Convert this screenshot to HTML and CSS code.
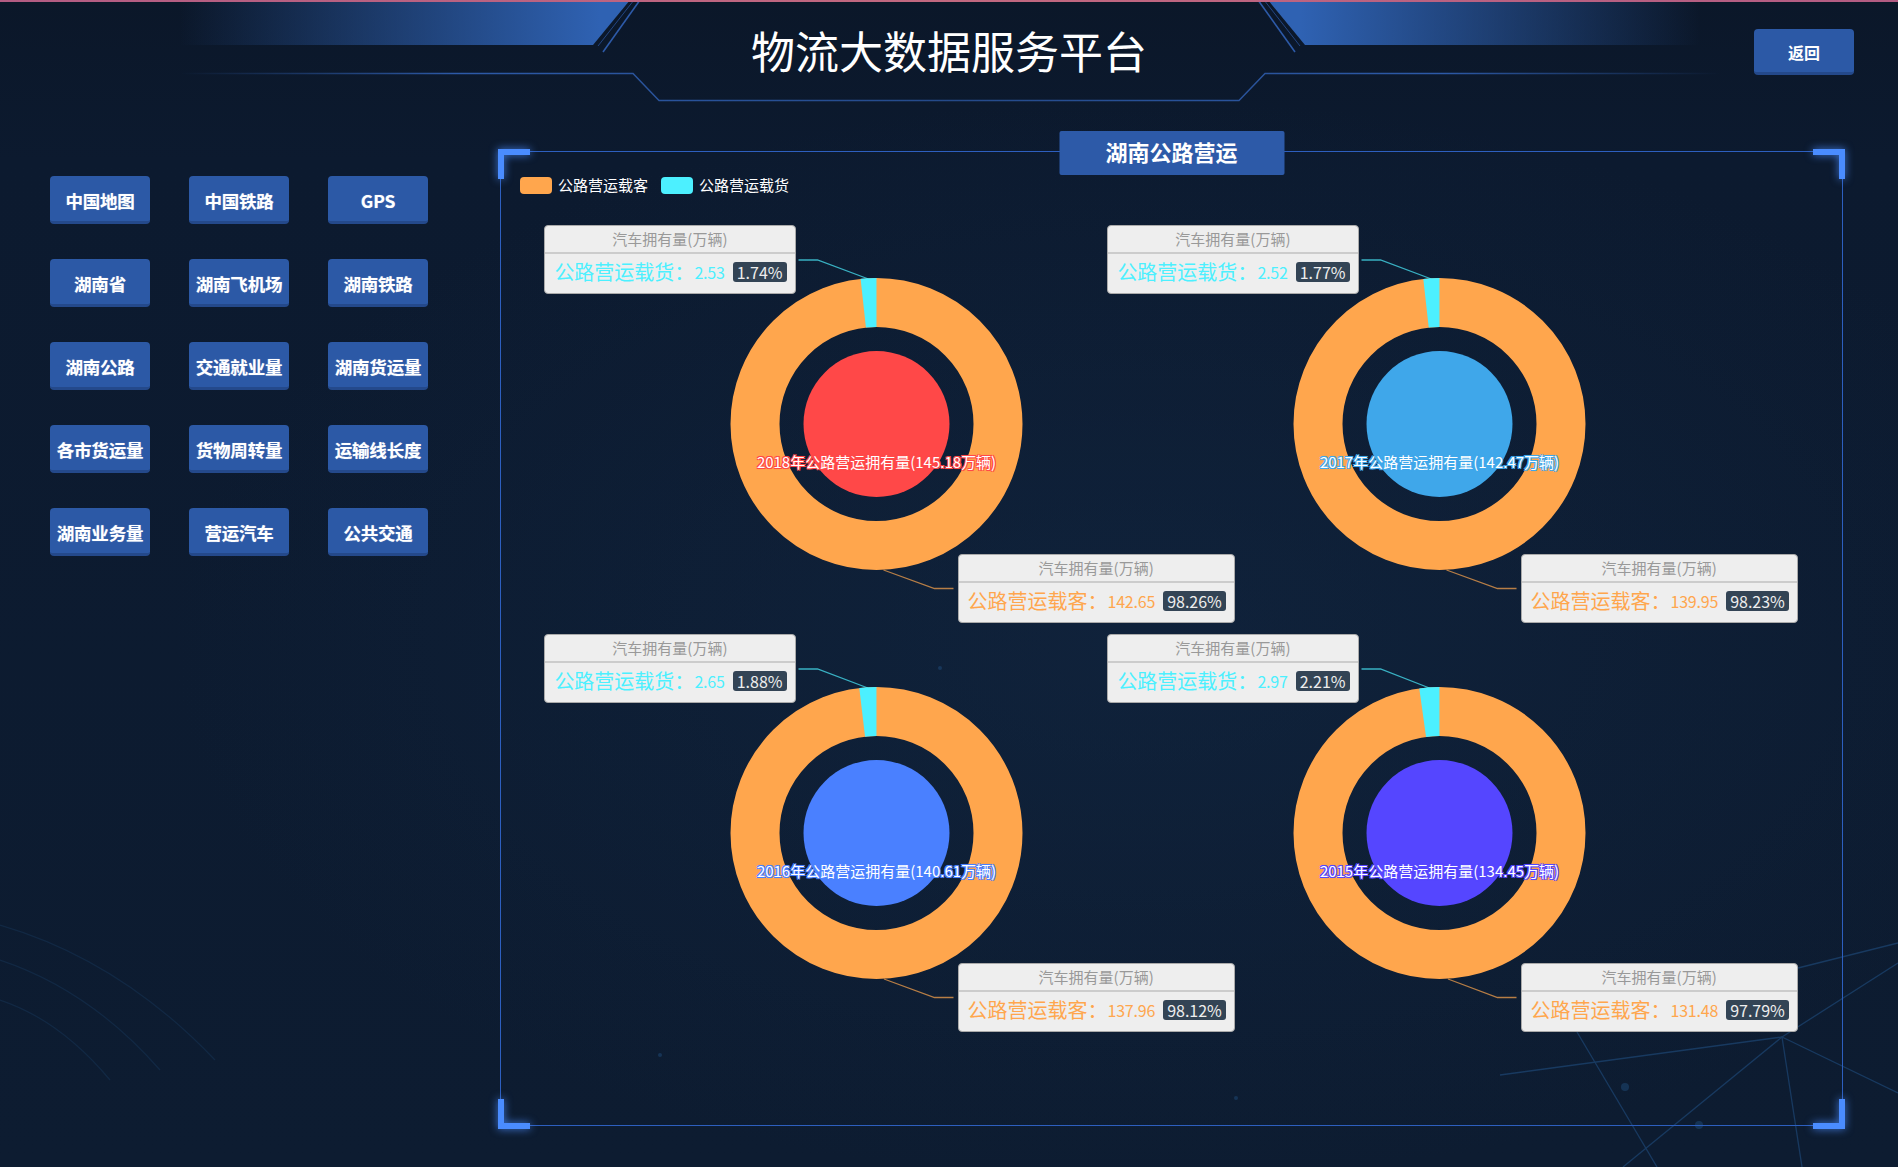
FILE: index.html
```html
<!DOCTYPE html>
<html lang="zh-CN">
<head>
<meta charset="utf-8">
<title>物流大数据服务平台</title>
<link rel="stylesheet" href="styles.css">
</head>
<body>
<div class="page">
  <svg class="bg-net" width="1898" height="1167" viewBox="0 0 1898 1167">
    <g stroke="#23578f" stroke-width="1.3" fill="none" opacity="0.5">
      <path d="M1782 1037 L1623 1167"/>
      <path d="M1782 1037 L1898 963"/>
      <path d="M1782 1037 L1802 1167"/>
      <path d="M1782 1037 L1898 1093"/>
      <path d="M1577 1032 L1657 1167"/>
      <path d="M1790 970 L1898 943"/>
      <path d="M1500 1075 L1782 1037"/>
    </g>
    <g stroke="#1d4670" stroke-width="1.2" fill="none" opacity="0.3">
      <path d="M0 925 Q120 960 215 1060"/>
      <path d="M0 960 Q90 990 160 1070"/>
      <path d="M0 1000 Q60 1020 110 1080"/>
    </g>
    <g fill="#2a6aa8" opacity="0.3">
      <circle cx="1789" cy="1005" r="2.5"/>
      <circle cx="1625" cy="1087" r="4"/>
      <circle cx="1699" cy="1125" r="4"/>
      <circle cx="1245" cy="248" r="2"/>
      <circle cx="940" cy="668" r="2"/>
      <circle cx="1236" cy="1098" r="2"/>
      <circle cx="660" cy="1055" r="2"/>
      <circle cx="1020" cy="1020" r="2"/>
    </g>
  </svg>

  <header class="header">
    <svg class="header-deco" width="1898" height="104" viewBox="0 0 1898 104">
      <defs>
        <linearGradient id="gTop" x1="0" y1="0" x2="1" y2="0">
          <stop offset="0" stop-color="#b35c83"/>
          <stop offset="0.5" stop-color="#c2687f"/>
          <stop offset="1" stop-color="#b35c83"/>
        </linearGradient>
        <linearGradient id="gLeft" gradientUnits="userSpaceOnUse" x1="180" y1="0" x2="600" y2="0">
          <stop offset="0" stop-color="#2f62b3" stop-opacity="0"/>
          <stop offset="1" stop-color="#2f62b3" stop-opacity="1"/>
        </linearGradient>
        <linearGradient id="gRight" gradientUnits="userSpaceOnUse" x1="1300" y1="0" x2="1700" y2="0">
          <stop offset="0" stop-color="#2f62b3" stop-opacity="1"/>
          <stop offset="1" stop-color="#2f62b3" stop-opacity="0"/>
        </linearGradient>
        <linearGradient id="gLine" gradientUnits="userSpaceOnUse" x1="180" y1="0" x2="1720" y2="0">
          <stop offset="0" stop-color="#2d5aa8" stop-opacity="0"/>
          <stop offset="0.18" stop-color="#2d5aa8" stop-opacity="1"/>
          <stop offset="0.5" stop-color="#2d5aa8" stop-opacity="0.75"/>
          <stop offset="0.82" stop-color="#2d5aa8" stop-opacity="1"/>
          <stop offset="1" stop-color="#2d5aa8" stop-opacity="0"/>
        </linearGradient>
      </defs>
      <polygon points="0,0 630,0 593,45 0,45" fill="url(#gLeft)"/>
      <polygon points="1268,0 1898,0 1898,45 1305,45" fill="url(#gRight)"/>
      <path d="M640 0 L603 52" stroke="#2d5aa8" stroke-width="1.6" fill="none"/>
      <path d="M634 0 L598 46" stroke="#2d5aa8" stroke-width="1" fill="none" opacity="0.7"/>
      <path d="M1258 0 L1295 52" stroke="#2d5aa8" stroke-width="1.6" fill="none"/>
      <path d="M1264 0 L1300 46" stroke="#2d5aa8" stroke-width="1" fill="none" opacity="0.7"/>
      <polyline points="180,73.5 633,73.5 659,100.5 1239,100.5 1265,73.5 1720,73.5" stroke="url(#gLine)" stroke-width="1.4" fill="none"/>
      <rect x="0" y="0" width="1898" height="2" fill="url(#gTop)"/>
    </svg>
    <div class="header-side"></div>
    <h1 class="title">物流大数据服务平台</h1>
    <div class="header-side header-right">
      <button class="back-btn">返回</button>
    </div>
  </header>

  <main class="main">
    <nav class="menu">
      <button class="menu-btn">中国地图</button>
      <button class="menu-btn">中国铁路</button>
      <button class="menu-btn">GPS</button>
      <button class="menu-btn">湖南省</button>
      <button class="menu-btn">湖南飞机场</button>
      <button class="menu-btn">湖南铁路</button>
      <button class="menu-btn">湖南公路</button>
      <button class="menu-btn">交通就业量</button>
      <button class="menu-btn">湖南货运量</button>
      <button class="menu-btn">各市货运量</button>
      <button class="menu-btn">货物周转量</button>
      <button class="menu-btn">运输线长度</button>
      <button class="menu-btn">湖南业务量</button>
      <button class="menu-btn">营运汽车</button>
      <button class="menu-btn">公共交通</button>
    </nav>

    <section class="panel">
      <i class="corner corner-tl"></i>
      <i class="corner corner-tr"></i>
      <i class="corner corner-bl"></i>
      <i class="corner corner-br"></i>
      <div class="panel-tab">湖南公路营运</div>

      <div class="legend">
        <div class="legend-item"><span class="swatch swatch-passenger"></span>公路营运载客</div>
        <div class="legend-item"><span class="swatch swatch-cargo"></span>公路营运载货</div>
      </div>

      <div class="charts">
        <!-- 2018 -->
        <div class="chart y2018">
          <svg class="donut" width="563" height="409" viewBox="0 0 563 409">
            <circle cx="281.5" cy="204" r="121.5" fill="none" stroke="#ffa64d" stroke-width="49"/>
            <circle cx="281.5" cy="204" r="121.5" fill="none" stroke="#4cf0ff" stroke-width="49" stroke-dasharray="13.28 800" transform="rotate(-96.26 281.5 204)"/>
            <circle class="pie" cx="281.5" cy="204" r="73"/>
            <polyline points="203.5,40 222.5,40 273.5,59" stroke="#4cf0ff" stroke-opacity="0.7" stroke-width="1.3" fill="none"/>
            <polyline points="288.5,350 339.5,368.5 358.5,368.5" stroke="#ffa64d" stroke-opacity="0.7" stroke-width="1.3" fill="none"/>
          </svg>
          <div class="pie-label">2018年公路营运拥有量(145.18万辆)</div>
          <div class="tip tip-top">
            <div class="tip-head">汽车拥有量(万辆)</div>
            <div class="tip-body cargo"><span class="tip-name">公路营运载货：</span><span class="tip-val">2.53</span><span class="tip-per">1.74%</span></div>
          </div>
          <div class="tip tip-bottom">
            <div class="tip-head">汽车拥有量(万辆)</div>
            <div class="tip-body passenger"><span class="tip-name">公路营运载客：</span><span class="tip-val">142.65</span><span class="tip-per">98.26%</span></div>
          </div>
        </div>

        <!-- 2017 -->
        <div class="chart y2017">
          <svg class="donut" width="563" height="409" viewBox="0 0 563 409">
            <circle cx="281.5" cy="204" r="121.5" fill="none" stroke="#ffa64d" stroke-width="49"/>
            <circle cx="281.5" cy="204" r="121.5" fill="none" stroke="#4cf0ff" stroke-width="49" stroke-dasharray="13.51 800" transform="rotate(-96.37 281.5 204)"/>
            <circle class="pie" cx="281.5" cy="204" r="73"/>
            <polyline points="203.5,40 222.5,40 273.4,59" stroke="#4cf0ff" stroke-opacity="0.7" stroke-width="1.3" fill="none"/>
            <polyline points="288.5,350 339.5,368.5 358.5,368.5" stroke="#ffa64d" stroke-opacity="0.7" stroke-width="1.3" fill="none"/>
          </svg>
          <div class="pie-label">2017年公路营运拥有量(142.47万辆)</div>
          <div class="tip tip-top">
            <div class="tip-head">汽车拥有量(万辆)</div>
            <div class="tip-body cargo"><span class="tip-name">公路营运载货：</span><span class="tip-val">2.52</span><span class="tip-per">1.77%</span></div>
          </div>
          <div class="tip tip-bottom">
            <div class="tip-head">汽车拥有量(万辆)</div>
            <div class="tip-body passenger"><span class="tip-name">公路营运载客：</span><span class="tip-val">139.95</span><span class="tip-per">98.23%</span></div>
          </div>
        </div>

        <!-- 2016 -->
        <div class="chart y2016">
          <svg class="donut" width="563" height="409" viewBox="0 0 563 409">
            <circle cx="281.5" cy="204" r="121.5" fill="none" stroke="#ffa64d" stroke-width="49"/>
            <circle cx="281.5" cy="204" r="121.5" fill="none" stroke="#4cf0ff" stroke-width="49" stroke-dasharray="14.35 800" transform="rotate(-96.77 281.5 204)"/>
            <circle class="pie" cx="281.5" cy="204" r="73"/>
            <polyline points="203.5,40 222.5,40 272.9,59" stroke="#4cf0ff" stroke-opacity="0.7" stroke-width="1.3" fill="none"/>
            <polyline points="289,350 339.5,368.5 358.5,368.5" stroke="#ffa64d" stroke-opacity="0.7" stroke-width="1.3" fill="none"/>
          </svg>
          <div class="pie-label">2016年公路营运拥有量(140.61万辆)</div>
          <div class="tip tip-top">
            <div class="tip-head">汽车拥有量(万辆)</div>
            <div class="tip-body cargo"><span class="tip-name">公路营运载货：</span><span class="tip-val">2.65</span><span class="tip-per">1.88%</span></div>
          </div>
          <div class="tip tip-bottom">
            <div class="tip-head">汽车拥有量(万辆)</div>
            <div class="tip-body passenger"><span class="tip-name">公路营运载客：</span><span class="tip-val">137.96</span><span class="tip-per">98.12%</span></div>
          </div>
        </div>

        <!-- 2015 -->
        <div class="chart y2015">
          <svg class="donut" width="563" height="409" viewBox="0 0 563 409">
            <circle cx="281.5" cy="204" r="121.5" fill="none" stroke="#ffa64d" stroke-width="49"/>
            <circle cx="281.5" cy="204" r="121.5" fill="none" stroke="#4cf0ff" stroke-width="49" stroke-dasharray="16.87 800" transform="rotate(-97.96 281.5 204)"/>
            <circle class="pie" cx="281.5" cy="204" r="73"/>
            <polyline points="203.5,40 222.5,40 271.4,59" stroke="#4cf0ff" stroke-opacity="0.7" stroke-width="1.3" fill="none"/>
            <polyline points="290,350 339.5,368.5 358.5,368.5" stroke="#ffa64d" stroke-opacity="0.7" stroke-width="1.3" fill="none"/>
          </svg>
          <div class="pie-label">2015年公路营运拥有量(134.45万辆)</div>
          <div class="tip tip-top">
            <div class="tip-head">汽车拥有量(万辆)</div>
            <div class="tip-body cargo"><span class="tip-name">公路营运载货：</span><span class="tip-val">2.97</span><span class="tip-per">2.21%</span></div>
          </div>
          <div class="tip tip-bottom">
            <div class="tip-head">汽车拥有量(万辆)</div>
            <div class="tip-body passenger"><span class="tip-name">公路营运载客：</span><span class="tip-val">131.48</span><span class="tip-per">97.79%</span></div>
          </div>
        </div>
      </div>
    </section>
  </main>
</div>
</body>
</html>
```

FILE: styles.css
```css
* {
  box-sizing: border-box;
  margin: 0;
  padding: 0;
}

html,
body {
  width: 1898px;
  height: 1167px;
  overflow: hidden;
}

body {
  background: #0c1a2e;
  font-family: "Noto Sans CJK SC", "Noto Sans", sans-serif;
  color: #fff;
}

.page {
  position: relative;
  width: 1898px;
  height: 1167px;
  background:
    radial-gradient(ellipse at 60% 55%, rgba(18, 40, 68, 0.55), rgba(12, 26, 46, 0) 60%),
    linear-gradient(180deg, #0b1729 0px, #0c1a2f 160px, #0d1c31 100%);
}

.bg-net {
  position: absolute;
  left: 0;
  top: 0;
  pointer-events: none;
}

/* ---------- header ---------- */
.header {
  position: relative;
  height: 104px;
  display: grid;
  grid-template-columns: 1fr auto 1fr;
}

.header-deco {
  position: absolute;
  left: 0;
  top: 0;
}

.title {
  position: relative;
  font-size: 44px;
  font-weight: 400;
  line-height: 100px;
  color: #fff;
  white-space: nowrap;
}

.header-right {
  position: relative;
  display: flex;
  justify-content: flex-end;
  align-items: flex-start;
  padding-top: 29px;
  padding-right: 44px;
}

.back-btn {
  width: 100px;
  height: 46px;
  background: #2c59a6;
  border: 0;
  border-bottom: 3px solid #24498b;
  border-radius: 4px;
  color: #fff;
  font-family: "Noto Sans CJK SC", sans-serif;
  font-size: 16px;
  font-weight: 700;
  padding-top: 2px;
}

/* ---------- main ---------- */
.main {
  position: relative;
  display: flex;
  align-items: flex-start;
  padding-left: 50px;
}

.menu {
  margin-top: 72px;
  width: 378px;
  display: grid;
  grid-template-columns: repeat(3, 100px);
  column-gap: 39px;
  row-gap: 35px;
}

.menu-btn {
  height: 48px;
  background: #2c59a6;
  border: 0;
  border-bottom: 3px solid #24498b;
  border-radius: 4px;
  color: #fff;
  font-family: "Noto Sans CJK SC", sans-serif;
  font-size: 17.5px;
  font-weight: 700;
  letter-spacing: -0.2px;
  white-space: nowrap;
  padding-top: 3px;
  text-shadow: 0 0 1px rgba(255, 255, 255, 0.5);
}

/* ---------- panel ---------- */
.panel {
  position: relative;
  margin-top: 47px;
  margin-left: 72px;
  width: 1343px;
  height: 975px;
  border: 1px solid #2d5fbf;
  padding: 24px 0 0 19px;
}

.corner {
  position: absolute;
  width: 32px;
  height: 30px;
  border: 0 solid #4a8cff;
  filter: drop-shadow(0 0 4px rgba(74, 140, 255, 0.85));
}

.corner-tl {
  left: -3px;
  top: -3px;
  border-top-width: 6px;
  border-left-width: 6px;
}

.corner-tr {
  right: -3px;
  top: -3px;
  border-top-width: 6px;
  border-right-width: 6px;
}

.corner-bl {
  left: -3px;
  bottom: -4px;
  border-bottom-width: 6px;
  border-left-width: 6px;
}

.corner-br {
  right: -3px;
  bottom: -4px;
  border-bottom-width: 6px;
  border-right-width: 6px;
}

.panel-tab {
  position: absolute;
  top: -21px;
  left: 50%;
  transform: translateX(-50%);
  width: 225px;
  height: 44px;
  background: #2d5aa8;
  border-radius: 2px;
  color: #fff;
  font-size: 22px;
  font-weight: 700;
  line-height: 40px;
  text-align: center;
}

.legend {
  display: flex;
  align-items: center;
  gap: 13px;
  height: 19px;
  font-size: 15px;
  line-height: 17px;
  color: #fff;
}

.legend-item {
  display: flex;
  align-items: center;
  gap: 6px;
  padding-bottom: 2px;
}

.swatch {
  width: 32px;
  height: 17px;
  border-radius: 4px;
  margin-top: 2px;
}

.swatch-passenger {
  background: #ffa64d;
}

.swatch-cargo {
  background: #4cf0ff;
}

.charts {
  margin-top: 25px;
  margin-left: 75px;
  display: grid;
  grid-template-columns: 563px 563px;
  grid-auto-rows: 409px;
}

.chart {
  position: relative;
  width: 563px;
  height: 409px;
}

.y2018 { --pie: #ff4848; }
.y2017 { --pie: #3fa7ea; }
.y2016 { --pie: #4a80ff; }
.y2015 { --pie: #5546ff; }

.donut {
  display: block;
  overflow: visible;
}

.pie {
  fill: var(--pie);
}

.pie-label {
  position: absolute;
  left: 0;
  right: 0;
  top: 232px;
  text-align: center;
  font-size: 15px;
  line-height: 20px;
  color: #fff;
  white-space: nowrap;
  text-shadow:
    -1px -1px 0 var(--pie),
    1px -1px 0 var(--pie),
    -1px 1px 0 var(--pie),
    1px 1px 0 var(--pie),
    0 0 2px var(--pie);
}

/* ---------- rich labels ---------- */
.tip {
  position: absolute;
  background: #eeeeee;
  border: 1px solid #aaaaaa;
  border-radius: 4px;
  white-space: nowrap;
}

.tip-top {
  right: 362.5px;
  top: 5px;
}

.tip-bottom {
  left: 362.5px;
  top: 334px;
}

.tip-head {
  height: 28px;
  line-height: 25px;
  text-align: center;
  color: #999999;
  font-size: 15px;
  border-bottom: 2px solid #cccccc;
}

.tip-body {
  height: 39px;
  display: flex;
  align-items: center;
  padding: 0 8px 3px 9px;
}

.tip-body.cargo {
  color: #4cf0ff;
}

.tip-body.passenger {
  color: #ffa64d;
}

.tip-name {
  font-size: 20px;
  line-height: 24px;
}

.tip-val {
  font-size: 16px;
  line-height: 20px;
  letter-spacing: -0.2px;
}

.tip-per {
  margin-left: 8px;
  background: #334455;
  color: #eeeeee;
  font-size: 16px;
  line-height: 20px;
  padding: 0 4px;
  border-radius: 3px;
}
```
